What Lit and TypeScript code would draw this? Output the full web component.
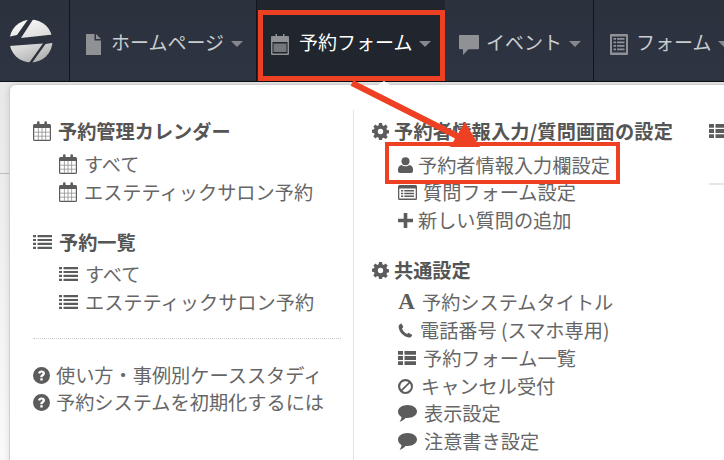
import { LitElement, html, css, svg } from "lit";
import { customElement } from "lit/decorators.js";

const icon = (w: number, h: number, vb: string, body: unknown) =>
  html`<svg class="ic" width=${w} height=${h} viewBox=${vb} fill="currentColor">${body}</svg>`;

const calendarBody = svg`
  <path fill-rule="evenodd" d="M1.500 3H4V1.600a1.300 1.300 0 0 1 2.600 0V3h4.800V1.600a1.300 1.300 0 0 1 2.600 0V3h2.500A1.500 1.500 0 0 1 18 4.500V18.500A1.500 1.500 0 0 1 16.500 20H1.500A1.500 1.500 0 0 1 0 18.500V4.500A1.500 1.500 0 0 1 1.500 3ZM1.200 7V18.800H16.800V7Z"/>
  <path opacity=".7" d="M4.900 7h.8V18.800h-.8ZM8.600 7h.8V18.800h-.8ZM12.300 7h.8V18.800h-.8ZM1.200 10.800h15.600v.8H1.200ZM1.200 14.800h15.600v.8H1.200Z"/>`;
const calendar = () => icon(18, 20, "0 0 18 20", calendarBody);
const navCalendar = () =>
  icon(18, 21, "0 0 18 21", svg`
    <path fill-rule="evenodd" d="M1 2h16a1 1 0 0 1 1 1v17a1 1 0 0 1-1 1H1a1 1 0 0 1-1-1V3a1 1 0 0 1 1-1ZM1.500 8v11.500h15V8Z"/>
    <path d="M2.500 9.500h13v8.500h-13Z" opacity=".75"/>
    <path d="M4.500 0h1.500v3H4.500ZM12 0h1.500v3H12Z"/>`);
const lines = () =>
  icon(19, 14, "0 0 19 14", svg`
    <path d="M0 0h3v2.200H0ZM4.500 0H19v2.200H4.500ZM0 3.900h3v2.200H0ZM4.500 3.900H19v2.200H4.500ZM0 7.800h3v2.200H0ZM4.500 7.800H19v2.200H4.500ZM0 11.700h3v2.200H0ZM4.500 11.700H19v2.200H4.500Z"/>`);
const thList = () =>
  icon(18, 14, "0 0 18 14", svg`
    <path d="M0 0h5v3.800H0ZM6.500 0H18v3.800H6.500ZM0 5.100h5v3.800H0ZM6.500 5.100H18v3.800H6.500ZM0 10.200h5V14H0ZM6.500 10.200H18V14H6.500Z"/>`);
const help = () =>
  icon(17, 17, "0 0 17 17", svg`
    <path fill-rule="evenodd" d="M8.500 0a8.500 8.500 0 1 1 0 17a8.500 8.500 0 0 1 0-17ZM7.300 11.200v2.300h2.400v-2.300ZM8.600 3.400c-2 0-3.300 1-3.500 2.900l2.200.4c.1-.9.500-1.300 1.200-1.300.6 0 1 .3 1 .9 0 .5-.3.800-.9 1.300-.9.700-1.300 1.300-1.300 2.400v.3h2.300v-.2c0-.5.200-.8.800-1.200.9-.7 1.600-1.400 1.600-2.700 0-1.700-1.300-2.800-3.400-2.800Z"/>`);
const gear = () =>
  icon(17, 17, "0 0 17 17", svg`
    <path fill-rule="evenodd" d="M7 0h3l.4 2.300 1.300.6 2-1.300 2 2.100-1.300 1.900.6 1.300 2 .4v3l-2 .4-.6 1.300 1.300 1.900-2 2.100-2-1.300-1.300.6L10 17H7l-.4-2.300-1.300-.6-2 1.300-2-2.100 1.300-1.900-.6-1.300-2-.4v-3l2-.4.6-1.300L1.300 3.700l2-2.100 2 1.300 1.300-.6ZM8.500 5.800a2.700 2.700 0 1 0 0 5.400a2.700 2.700 0 0 0 0-5.400Z"/>`);
const person = () =>
  icon(15, 16, "0 0 15 16", svg`
    <circle cx="7.500" cy="4.200" r="4"/><path d="M3.500 8c1 .8 2.500 1.300 4 1.300s3-.5 4-1.300c2 .4 3.500 2 3.500 4.500V14c0 1.200-.9 2-2 2H2c-1.100 0-2-.8-2-2v-1.500C0 10 1.500 8.400 3.500 8Z"/>`);
const listAlt = () =>
  icon(19, 15, "0 0 19 15", svg`
    <path fill-rule="evenodd" d="M1.500 0h16A1.500 1.500 0 0 1 19 1.500v12a1.500 1.500 0 0 1-1.500 1.500h-16A1.500 1.500 0 0 1 0 13.500v-12A1.500 1.500 0 0 1 1.500 0ZM1.300 3.500v10h16.400v-10Z"/>
    <path d="M3 5h2.200v1.400H3ZM6.300 5H16v1.400H6.300ZM3 7.800h2.200v1.400H3ZM6.300 7.800H16v1.400H6.300ZM3 10.600h2.200V12H3ZM6.300 10.600H16V12H6.300Z"/>`);
const plus = () =>
  icon(15, 15, "0 0 15 15", svg`<path d="M5.700 0h3.600v5.700H15v3.600H9.300V15H5.700V9.300H0V5.700h5.700Z"/>`);
const fontA = () => html`<span class="letter-a">A</span>`;
const phone = () =>
  icon(15, 15, "0 0 15 15", svg`
    <path d="M3.400.5 5.400 4 4 5.500c.9 2.300 2.700 4.300 5.200 5.600l1.400-1.400L14.200 12c-.3 1.600-1.700 2.800-3.300 2.600C5.300 13.800 1 9 .6 3.600.6 2.200 1.800.8 3.400.5Z"/>`);
const ban = () =>
  icon(15, 15, "0 0 15 15", svg`
    <path fill-rule="evenodd" d="M7.500 0a7.500 7.500 0 1 1 0 15a7.500 7.500 0 0 1 0-15ZM7.500 2.200a5.300 5.300 0 0 0-4.300 8.400l7.400-7.400a5.300 5.300 0 0 0-3.100-1ZM11.800 4.400l-7.400 7.400a5.300 5.300 0 0 0 7.400-7.400Z"/>`);
const bubble = () =>
  icon(19, 17, "0 0 19 17", svg`
    <path d="M9.500 0C14.700 0 19 2.900 19 6.500S14.700 13 9.500 13c-.7 0-1.300 0-2-.1-1.300 1.700-3.500 3.300-6 3.900 1-1.200 1.800-2.700 2-4.700C1.400 11 0 8.900 0 6.500 0 2.900 4.300 0 9.500 0Z"/>`);
const navFile = () =>
  icon(15, 21, "0 0 15 21", svg`
    <path d="M0 0h8.500v6.500H15V21H0Z"/><path d="M10 0l5 5h-5Z"/>`);
const navBubble = () =>
  icon(20, 20, "0 0 20 20", svg`
    <path d="M.8 0h18.400c.4 0 .8.400.8.800V13.500c0 .4-.4.800-.8.800H9.500L4 20v-5.700H.8c-.4 0-.8-.4-.8-.8V.8C0 .4.400 0 .8 0Z"/>`);
const navList = () =>
  icon(18, 21, "0 0 18 21", svg`
    <path fill-rule="evenodd" d="M1 0h16a1 1 0 0 1 1 1v19a1 1 0 0 1-1 1H1a1 1 0 0 1-1-1V1a1 1 0 0 1 1-1ZM2 2.500v16h14v-16Z"/>
    <path d="M3.500 4h2.500v1.800H3.500ZM7 4h7.500v1.800H7ZM3.500 7.500h2.500v1.800H3.500ZM7 7.500h7.500v1.800H7ZM3.500 11h2.500v1.800H3.500ZM7 11h7.500v1.800H7ZM3.500 14.500h2.500v1.800H3.500ZM7 14.500h7.500v1.800H7Z"/>`);

@customElement("app-root")
export class AppRoot extends LitElement {
  static styles = css`
    :host {
      display: block;
      position: relative;
      width: 724px;
      height: 460px;
      overflow: hidden;
      background: linear-gradient(to bottom, #f0f0f0, #e8e8e8 92px, #fafafa);
      font-family: "Noto Sans CJK JP", "Noto Sans", sans-serif;
      color: #666;
    }
    .nav {
      display: flex;
      height: 81px;
      border-bottom: 1px solid #0d1015;
      background: linear-gradient(to bottom, #2b313d, #2e3542);
      white-space: nowrap;
    }
    .logo {
      flex: none;
      width: 70px;
      display: flex;
      align-items: center;
      padding-left: 9px;
      box-sizing: border-box;
      border-right: 1px solid #12151b;
    }
    .item {
      flex: none;
      display: flex;
      align-items: center;
      box-sizing: border-box;
      padding-top: 5px;
      font-size: 19px;
      line-height: 24px;
      color: #c9ccd0;
      border-right: 1px solid #12151b;
    }
    .item .ic { color: #8f9195; margin-top: 3px; }
    .item .t { margin-top: -3px; }
    .home { width: 187px; padding-left: 16px; }
    .home .t { margin-left: 10px; }
    .active {
      width: 188px;
      padding-left: 14px;
      background: #20252e;
      color: #fff;
      border-right: 0;
    }
    .active .t { margin-left: 10px; }
    .event { width: 149px; padding-left: 14px; }
    .event .t { margin-left: 7px; }
    .form { width: 200px; padding-left: 16px; border-right: 0; }
    .form .t { margin-left: 8px; }
    .caret {
      width: 0;
      height: 0;
      margin-left: 7px;
      margin-top: 2px;
      border: 6px solid transparent;
      border-bottom: 0;
      border-top: 6px solid #86888c;
    }
    .rule {
      position: absolute;
      left: 0;
      top: 173px;
      width: 9px;
      height: 1px;
      background: #bdbdbd;
    }
    .panel {
      position: absolute;
      left: 9px;
      top: 84px;
      width: 800px;
      height: 420px;
      display: flex;
      box-sizing: border-box;
      background: #fff;
      border: 1px solid #cfcfcf;
      border-radius: 7px;
      box-shadow: 0 0 6px rgba(0, 0, 0, 0.12);
      font-size: 19.2px;
      line-height: 28px;
    }
    .notch {
      position: absolute;
      left: 368px;
      top: -4px;
      width: 0;
      height: 0;
      border: 6px solid transparent;
      border-top: 0;
      border-bottom: 4px solid #fff;
    }
    .col { box-sizing: border-box; flex: none; }
    .c1 { width: 344px; padding: 7px 12px 0 23px; border-right: 1px solid #e3e3e3; margin-top: 25px; }
    .c2 { width: 355px; padding: 7px 0 0 18px; margin-top: 25px; }
    .c3 { padding: 7px 0 0 0; margin-top: 25px; }
    .head, .row { display: flex; align-items: center; height: 28px; white-space: nowrap; }
    .head { font-weight: 700; color: #555; }
    .wide { letter-spacing: 0.2px; }
    .row { padding-left: 26px; color: #666; }
    .row.flush { padding-left: 0; }
    .ic { flex: none; color: #5c5c5c; }
    .g5 { gap: 5px; }
    .g6 { gap: 6px; }
    .g7 { gap: 7px; }
    .g8 { gap: 8px; }
    .s4 { height: 4px; }
    .s5 { height: 5px; }
    .s6 { height: 6px; }
    .s22 { height: 22px; }
    .up { margin-top: -1px; }
    hr {
      margin: 22px 0 22px;
      border: 0;
      border-top: 1px dotted #c9c9c9;
    }
    .letter-a {
      font-family: "Liberation Serif", serif;
      font-weight: 700;
      font-size: 23px;
      line-height: 20px;
      width: 17px;
      color: #5c5c5c;
      text-align: center;
    }
    .bar { margin-top: 38px; width: 40px; height: 2px; background: #e6e6e6; }
    .anno { position: absolute; inset: 0; pointer-events: none; }
    .box { position: absolute; box-sizing: border-box; border: 5px solid #ee4124; }
    .box1 { left: 258px; top: 10px; width: 187px; height: 71px; }
    .box2 { left: 385px; top: 142px; width: 235px; height: 42px; border-width: 4.5px; }
    .arrow { position: absolute; left: 0; top: 0; }
  `;

  render() {
    return html`
      <div class="nav">
        <div class="logo">
          <svg width="44" height="44" viewBox="9 18 44 44">
            <defs>
              <linearGradient id="g" x1="0.2" y1="0" x2="0.6" y2="1">
                <stop offset="0" stop-color="#fbfbfb" />
                <stop offset="0.6" stop-color="#d8d8d8" />
                <stop offset="1" stop-color="#b0b0b0" />
              </linearGradient>
            </defs>
            <circle cx="31" cy="40" r="21.5" fill="url(#g)" />
            <path
              fill="#2c323e"
              d="M34 17 21 37 54 33.500V41.500L45.500 43 32 62H29L43 42.500 8 45V36L17 34 29 17Z"
            />
          </svg>
        </div>
        <div class="item home">${navFile()}<span class="t">ホームページ</span><span class="caret"></span></div>
        <div class="item active">${navCalendar()}<span class="t">予約フォーム</span><span class="caret"></span></div>
        <div class="item event">${navBubble()}<span class="t">イベント</span><span class="caret"></span></div>
        <div class="item form">${navList()}<span class="t">フォーム</span><span class="caret"></span></div>
      </div>
      <div class="rule"></div>
      <div class="panel">
        <div class="notch"></div>
        <div class="col c1">
          <div class="head g7">${calendar()}予約管理カレンダー</div>
          <div class="s5"></div>
          <div class="row g7">${calendar()}すべて</div>
          <div class="row g7">${calendar()}エステティックサロン予約</div>
          <div class="s22"></div>
          <div class="head g7">${lines()}予約一覧</div>
          <div class="s4"></div>
          <div class="row g7">${lines()}すべて</div>
          <div class="row g7">${lines()}エステティックサロン予約</div>
          <hr />
          <div class="row flush g6">${help()}使い方・事例別ケーススタディ</div>
          <div class="row flush g6 up">${help()}予約システムを初期化するには</div>
        </div>
        <div class="col c2">
          <div class="head g5 wide">${gear()}予約者情報入力/質問画面の設定</div>
          <div class="s6"></div>
          <div class="row g5">${person()}予約者情報入力欄設定</div>
          <div class="row g6 up">${listAlt()}質問フォーム設定</div>
          <div class="row g5">${plus()}新しい質問の追加</div>
          <div class="s22"></div>
          <div class="head g5">${gear()}共通設定</div>
          <div class="s4"></div>
          <div class="row g7">${fontA()}予約システムタイトル</div>
          <div class="row g7">${phone()}電話番号 (スマホ専用)</div>
          <div class="row g7">${thList()}予約フォーム一覧</div>
          <div class="row g8">${ban()}キャンセル受付</div>
          <div class="row g7 up">${bubble()}表示設定</div>
          <div class="row g7">${bubble()}注意書き設定</div>
        </div>
        <div class="col c3">
          <div class="head">${thList()}</div>
          <div class="bar"></div>
        </div>
      </div>
      <div class="anno">
        <svg class="arrow" width="724" height="460" viewBox="0 0 724 460">
          <path d="M352 83 459 137" stroke="#ee4124" stroke-width="6" fill="none" />
          <path d="M465 122 480 147 450 147Z" fill="#ee4124" />
        </svg>
        <div class="box box1"></div>
        <div class="box box2"></div>
      </div>
    `;
  }
}
